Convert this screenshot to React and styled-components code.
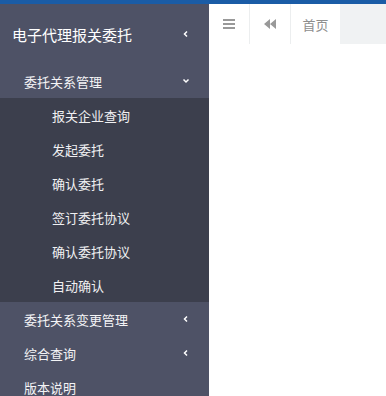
import React from 'react'
import styled, { createGlobalStyle } from 'styled-components'

const Global = createGlobalStyle`
    body {
        margin: 0;
        font-family: "Microsoft YaHei", "Noto Sans CJK SC", sans-serif;
    }
`

const Page = styled.div`
    width: 386px;
    height: 396px;
    overflow: hidden;
    display: flex;
    flex-direction: column;
    background: #fff;
`

const TopLine = styled.div`
    height: 4px;
    background: #1a5ca6;
    flex-shrink: 0;
`

const Body = styled.div`
    flex: 1;
    display: flex;
`

const Sidebar = styled.div`
    width: 209px;
    background: #4e5266;
    color: #fff;
    display: flex;
    flex-direction: column;
    flex-shrink: 0;
`

const Brand = styled.div`
    height: 60px;
    display: flex;
    align-items: center;
    justify-content: space-between;
    padding: 0 19px 0 12px;
    font-size: 15px;
`

const MenuItem = styled.div`
    height: 34px;
    display: flex;
    align-items: center;
    justify-content: space-between;
    padding: 0 19px 0 24px;
    font-size: 13px;
    color: #f4f4f6;
`

const SubMenu = styled.div`
    background: #3c3f4d;
    display: flex;
    flex-direction: column;
`

const SubItem = styled.div`
    height: 34px;
    display: flex;
    align-items: center;
    padding-left: 52px;
    font-size: 13px;
    color: #f0f0f2;
`

const Main = styled.div`
    flex: 1;
    display: flex;
    flex-direction: column;
`

const Tabs = styled.div`
    height: 40px;
    display: flex;
    background: #f0f2f3;
`

const ToolButton = styled.div`
    width: ${p => p.w}px;
    background: #fff;
    border-right: 1px solid #eceeef;
    display: flex;
    align-items: center;
    justify-content: center;
    color: #9a9a9a;
`

const Tab = styled.div`
    width: 49px;
    background: #fff;
    display: flex;
    align-items: center;
    justify-content: center;
    font-size: 13px;
    color: #8e8e8e;
`

const Chevron = ({ dir }) => (
    <svg width="8" height="8" viewBox="0 0 8 8">
        <path
            d={dir === 'down' ? 'M1.5 2.5 L4 5 L6.5 2.5' : 'M5 1.5 L2.5 4 L5 6.5'}
            fill="none"
            stroke="#fff"
            strokeWidth="1.5"
        />
    </svg>
)

const subs = ['报关企业查询', '发起委托', '确认委托', '签订委托协议', '确认委托协议', '自动确认']

export default function App() {
    return (
        <Page>
            <Global />
            <TopLine />
            <Body>
                <Sidebar>
                    <Brand>
                        电子代理报关委托
                        <Chevron />
                    </Brand>
                    <MenuItem>
                        委托关系管理
                        <Chevron dir="down" />
                    </MenuItem>
                    <SubMenu>
                        {subs.map(s => <SubItem key={s}>{s}</SubItem>)}
                    </SubMenu>
                    <MenuItem>
                        委托关系变更管理
                        <Chevron />
                    </MenuItem>
                    <MenuItem>
                        综合查询
                        <Chevron />
                    </MenuItem>
                    <MenuItem>版本说明</MenuItem>
                </Sidebar>
                <Main>
                    <Tabs>
                        <ToolButton w={40}>
                            <svg width="12" height="10" viewBox="0 0 12 10">
                                <rect x="0" y="0" width="12" height="2" fill="#999" />
                                <rect x="0" y="4" width="12" height="2" fill="#999" />
                                <rect x="0" y="8" width="12" height="2" fill="#999" />
                            </svg>
                        </ToolButton>
                        <ToolButton w={40}>
                            <svg width="12" height="10" viewBox="0 0 12 10">
                                <path d="M6 0 L0 5 L6 10 Z M12 0 L6 5 L12 10 Z" fill="#999" />
                            </svg>
                        </ToolButton>
                        <Tab>首页</Tab>
                    </Tabs>
                </Main>
            </Body>
        </Page>
    )
}
